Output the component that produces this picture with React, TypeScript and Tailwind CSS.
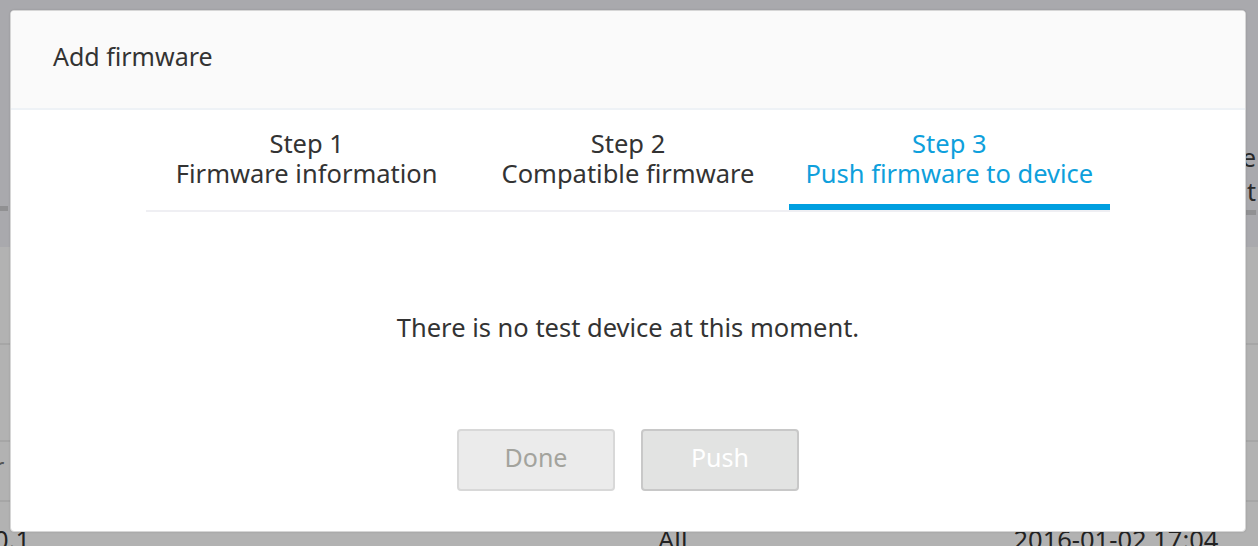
import React from "react";

const font = { fontFamily: '"Noto Sans", "Open Sans", sans-serif' };

const steps = [
  { title: "Step 1", label: "Firmware information" },
  { title: "Step 2", label: "Compatible firmware" },
  { title: "Step 3", label: "Push firmware to device" },
];

export default function App() {
  const active = 2;

  return (
    <div className="relative w-[1258px] h-[546px] overflow-hidden bg-[#b2b2b2] text-[#222]" style={font}>
      {/* Page behind the dimmed overlay */}
      <div className="flex flex-col h-full">
        <div className="h-[247px] bg-[#a9a9ad] flex flex-col justify-end">
          <div className="flex justify-between items-end pb-[36px]">
            <div className="w-[8px] h-[5px] bg-[#909092]" />
            <div className="flex flex-col items-end leading-[34px] text-[25px] text-[#2a2a2a] pr-[2px] -mb-[4px]">
              <span>e</span>
              <span>t</span>
              <div className="w-[12px] h-[5px] bg-[#919193] mt-[2px]" />
            </div>
          </div>
        </div>
        <div className="h-[98px] border-b-2 border-[#a6a6a6]" />
        <div className="h-[97px] border-b-2 border-[#a6a6a6]" />
        <div className="h-[60px] border-b-2 border-[#a6a6a6] flex items-center">
          <span className="text-[25px] text-[#555] -ml-[6px] -mt-[8px]">r</span>
        </div>
        <div className="flex-1 flex items-end text-[25.5px] leading-none text-[#222]">
          <span className="-ml-[6px] -mb-[6px]">0.1</span>
          <span className="ml-[628px] -mb-[6px]">All</span>
          <span className="ml-[326px] -mb-[6px]">2016-01-02 17:04</span>
        </div>
      </div>

      {/* Dialog */}
      <div className="absolute left-[10px] top-[10px] w-[1236px] h-[522px] rounded-[4px] border border-[#d6d6d6] bg-white overflow-hidden flex flex-col shadow-[0_0_2px_rgba(0,0,0,0.15)]">
        <div className="h-[99px] shrink-0 bg-[#fafafa] border-b-2 border-[#eef2f6] pt-[30px] px-[42px]">
          <h2 className="text-[25px] leading-[30px] text-[#333]">Add firmware</h2>
        </div>

        <div className="w-[964px] mx-auto flex border-b-2 border-[#efeff3]">
          {steps.map((s, i) => (
            <div key={s.title} className="flex-1 flex flex-col items-center">
              <div
                className={
                  "pt-[18px] pb-[16px] text-center text-[25.5px] leading-[30px] " +
                  (i === active ? "text-[#0ea0dc]" : "text-[#333]")
                }
              >
                <div>{s.title}</div>
                <div>{s.label}</div>
              </div>
              <div className={"h-[6px] w-full " + (i === active ? "bg-[#009fe0]" : "bg-transparent")} />
            </div>
          ))}
        </div>

        <p className="mt-[100px] text-center text-[25.5px] leading-[30px] text-[#333]">
          There is no test device at this moment.
        </p>

        <div className="mt-[87px] flex justify-center gap-[26px]">
          <button className="w-[158px] h-[62px] pb-[4px] rounded-[4px] border-2 border-[#d8d8d8] bg-[#ebebeb] text-[25px] text-[#a3a39d]">
            Done
          </button>
          <button className="w-[158px] h-[62px] pb-[4px] rounded-[4px] border-2 border-[#c8c8c8] bg-[#e2e3e2] text-[25px] text-white">
            Push
          </button>
        </div>
      </div>
    </div>
  );
}
